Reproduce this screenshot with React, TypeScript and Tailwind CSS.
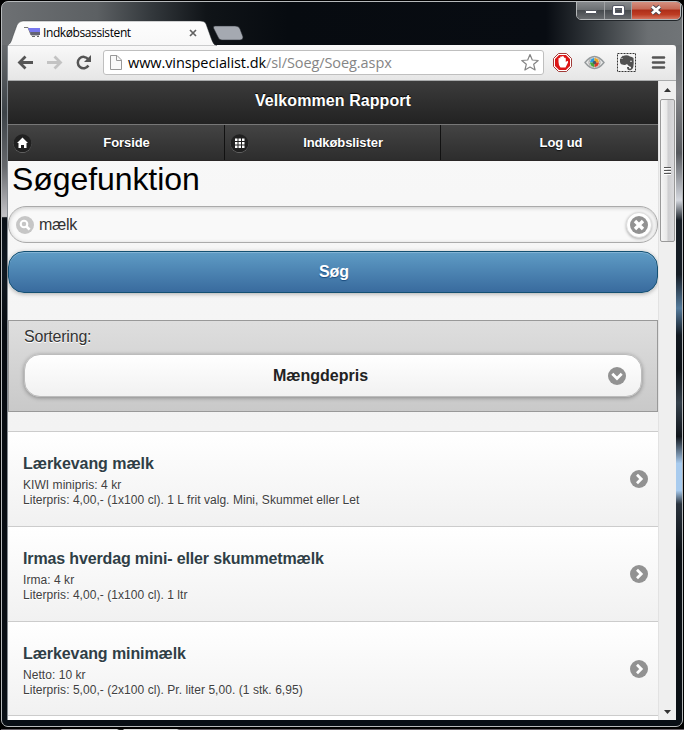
import React from "react";

const arial = "font-['Liberation_Sans',Arial,sans-serif]";
const segoe = "font-['Open_Sans','Noto_Sans',sans-serif]";

type Item = { title: string; shop: string; detail: string; tracking: string };

const items: Item[] = [
  { title: "Lærkevang mælk", shop: "KIWI minipris: 4 kr", detail: "Literpris: 4,00,- (1x100 cl). 1 L frit valg. Mini, Skummet eller Let", tracking: "tracking-[-0.06px]" },
  { title: "Irmas hverdag mini- eller skummetmælk", shop: "Irma: 4 kr", detail: "Literpris: 4,00,- (1x100 cl). 1 ltr", tracking: "tracking-[-0.14px]" },
  { title: "Lærkevang minimælk", shop: "Netto: 10 kr", detail: "Literpris: 5,00,- (2x100 cl). Pr. liter 5,00. (1 stk. 6,95)", tracking: "tracking-[-0.09px]" },
];

function RoundIcon({ kind }: { kind: "right" | "down" | "close" | "search" }) {
  return (
    <svg width="18" height="18" viewBox="0 0 18 18" className="block shrink-0">
      <circle cx="9" cy="9" r="9" fill={kind === "search" ? "#c6c6c6" : "#929292"} />
      {kind === "right" && <path d="M7 4.8 11.2 9 7 13.2" fill="none" stroke="#fff" strokeWidth="2.8" />}
      {kind === "down" && <path d="M4.3 6.7 9 11.4 13.7 6.7" fill="none" stroke="#fff" strokeWidth="2.8" />}
      {kind === "close" && <path d="M5 5 13 13M13 5 5 13" fill="none" stroke="#fff" strokeWidth="3.4" />}
      {kind === "search" && (
        <g fill="none" stroke="#fff">
          <circle cx="8" cy="8" r="3.300" strokeWidth="2.100" />
          <path d="M10.3 10.3 13.6 13.6" strokeWidth="2.7" />
        </g>
      )}
    </svg>
  );
}

function WindowButtons() {
  return (
    <div className="absolute right-[1px] top-[-2px] flex h-[20px] w-[105px] overflow-hidden rounded-b-[5px] border border-[#b4b7b9] shadow-[0_0_0_1px_#22262a]">
      <div className="flex w-[28px] items-center justify-center border-r border-[#a0a2a4] bg-[linear-gradient(#8b8e91_0%,#6c7073_48%,#45494d_50%,#686b6e_100%)]">
        <div className="mt-[4px] h-[4px] w-[12px] rounded-[1px] border border-[#51545d] bg-white" />
      </div>
      <div className="flex w-[27px] items-center justify-center border-r border-[#a0a2a4] bg-[linear-gradient(#8b8e91_0%,#6c7073_48%,#45494d_50%,#686b6e_100%)]">
        <div className="h-[9px] w-[11px] rounded-[1px] border-2 border-white outline outline-[#555966]">
          <div className="h-full w-full border border-[#555966]" />
        </div>
      </div>
      <div className="flex flex-1 items-center justify-center bg-[linear-gradient(#d69586_0%,#c56a56_45%,#ae2d18_50%,#bd3c23_75%,#d57560_100%)]">
        <svg width="14" height="12" viewBox="0 0 14 12">
          <path d="M3 2.5 11 9.5M11 2.5 3 9.5" stroke="#4b4751" strokeWidth="4.5" />
          <path d="M3 2.5 11 9.5M11 2.5 3 9.5" stroke="#fff" strokeWidth="2.7" />
        </svg>
      </div>
    </div>
  );
}

function TabStrip() {
  return (
    <div className="relative h-[43px] w-full shrink-0">
      <svg className="absolute left-0 top-[16px]" width="260" height="28" viewBox="2 18 260 28">
        <defs>
          <linearGradient id="tab" x2="0" y2="1">
            <stop offset="0" stopColor="#fdfdfd" />
            <stop offset="1" stopColor="#f8f8f8" />
          </linearGradient>
        </defs>
        <path d="M7 46C11 43 11 42 13 36L17 25Q19 21 23 21H200Q205 21 206 24L211 38Q213 45 217 46Z" fill="url(#tab)" stroke="#343739" strokeOpacity=".45" />
        <path d="M215 26H235Q239 26 240 29L243 37Q243 40 240 40H222Q219 40 218 37L213.500 28Q213 26 215 26Z" fill="#a5a9b1" stroke="#252a2f" strokeOpacity=".5" />
        <path d="M24 27.500H28L31 35H39" fill="none" stroke="#777" />
        <path d="M28 28H40V32H30Z" fill="#7777ee" />
        <path d="M30 32H40V35H31Z" fill="#626273" />
        <path d="M32 36.500H35M37 36.500H39" stroke="#666" />
        <path d="M190 30 196 36M196 30 190 36" stroke="#626262" strokeWidth="1.7" />
      </svg>
      <span className={`absolute left-[41px] top-[22px] whitespace-nowrap text-[12px] leading-[18px] tracking-[-0.4px] text-black ${segoe}`}>Indkøbsassistent</span>
      <WindowButtons />
    </div>
  );
}

function Toolbar() {
  return (
    <div className="flex h-[36px] shrink-0 items-center rounded-tr-[3px] border-b border-[#a9abac] bg-gradient-to-b from-[#f9f9f9] to-[#e6e6e6]">
      <svg width="95" height="35" viewBox="8 45 95 35" fill="none" className="shrink-0">
        <path d="M33 62.500H20M25.500 56.500 19.500 62.500 25.500 68.500" stroke="#555" strokeWidth="2.8" />
        <path d="M47 62.500H60M54.500 56.500 60.500 62.500 54.500 68.500" stroke="#c3c3c3" strokeWidth="2.8" />
        <path d="M88.200 59.300A5.700 5.700 0 1 0 88.400 65.500" stroke="#555" strokeWidth="2.5" />
        <path d="M91 55V62H84Z" fill="#555" />
      </svg>
      <div className="mr-px flex h-[25px] w-[441px] shrink-0 items-center rounded-[3px] border border-[#bfbfbf] bg-white">
        <svg width="24" height="23" viewBox="103 51 24 23" className="shrink-0">
          <path d="M109.500 55.500H116L120.500 60V69.500H109.500Z" fill="#fafafa" stroke="#999" />
          <path d="M115.500 56V60.500H120" fill="none" stroke="#999" />
        </svg>
        <span className={`w-[391px] whitespace-nowrap text-[14.5px] leading-[21px] tracking-[-0.08px] text-[#858585] ${segoe}`}><span className="text-black">www.vinspecialist.dk</span>/sl/Soeg/Soeg.aspx</span>
        <svg width="22" height="23" viewBox="519 51 22 23" className="shrink-0">
          <path d="M530 54.500 532.300 60 538.200 60.500 533.700 64.300 535.100 70 530 67 524.900 70 526.300 64.300 521.800 60.500 527.700 60Z" fill="#fff" stroke="#858585" strokeWidth="1.200" strokeLinejoin="round" />
        </svg>
      </div>
      <svg width="131" height="35" viewBox="545 45 131 35" className="shrink-0">
        <path d="M558.500 53.500H566.500L571.500 58.500V66.500L566.500 71.500H558.500L553.500 66.500V58.500Z" fill="#fff" stroke="#a23b38" />
        <path d="M559 55H566L570 59V66L566 70H559L555 66V59Z" fill="#dd1616" />
        <path d="M558.500 62V58.500Q559.300 57 560.200 58.500V57Q561 55.500 562 57V56.500Q563 55.500 564 57V58Q565 57 565.800 58.500V62L567 61Q568.500 60.500 568 62.500L565.500 67.500H560.500Q558.500 65.500 558.500 62Z" fill="#fff" />
        <path d="M585 62.500Q594.500 50.500 604 62.500Q594.500 74.500 585 62.500Z" fill="#e8e8e8" stroke="#969b9d" strokeWidth="1.4" />
        <circle cx="594.500" cy="62.500" r="5.500" fill="#fff" stroke="#999" />
        <path d="M594.500 62.500V58A4.500 4.500 0 0 0 590 62.500Z" fill="#2a9add" />
        <path d="M594.500 62.500H599A4.500 4.500 0 0 0 594.500 58Z" fill="#eca222" />
        <path d="M594.500 62.500H590A4.500 4.500 0 0 0 594.500 67Z" fill="#46a83b" />
        <path d="M594.500 62.500V67A4.500 4.500 0 0 0 599 62.500Z" fill="#d73a27" />
        <circle cx="594.500" cy="62.500" r="1.700" fill="#4b5863" />
        <rect x="617.500" y="53.500" width="18" height="18" fill="#f4f4f4" stroke="#333" strokeDasharray="2 1" />
        <path d="M623 56V59H620Q619.500 64 622 64.500Q625 65.500 627 64Q629 67 631 67V68.500H629V67H627Q627 71 631 70Q634.500 69 633.500 58Q632 56.500 630 56.500Q627 54.500 623 56Z" fill="#505050" />
        <path d="M623 55.500 620 58.500H623Z" fill="#505050" />
        <path d="M630 61.500Q631 60.500 632 61.500" stroke="#ddd" fill="none" />
        <path d="M653 57.500H664M653 62.500H664M653 67.500H664" stroke="#555" strokeWidth="2.6" strokeLinecap="round" />
      </svg>
    </div>
  );
}

function NavItem({ label, width, icon }: { label: string; width: string; icon?: "home" | "grid" }) {
  return (
    <div className={`flex h-full items-center border-r border-[#111] bg-gradient-to-b from-[#444] to-[#2d2d2d] ${width}`}>
      {icon && (
        <svg width="20" height="20" viewBox="0 0 20 20" className="-mr-[19px] ml-[4px] shrink-0">
          <circle cx="10.500" cy="11" r="9" fill="#777" />
          <circle cx="10.500" cy="10.300" r="9" fill="#202020" />
          {icon === "home" ? (
            <path d="M10.500 4.500 16 10H14.500V15H12V12H9V15H6.500V10H5Z" fill="#fff" />
          ) : (
            <g fill="#fff">
              {[6, 9.5, 13].map((y) => [6, 9.5, 13].map((x) => <rect key={`${x}-${y}`} x={x} y={y - 0.5} width="2.500" height="2.500" />))}
            </g>
          )}
        </svg>
      )}
      <span className={`flex-1 text-center text-[13px] font-bold leading-[16px] tracking-[-0.09px] text-white [text-shadow:0_1px_1px_#111] ${icon ? "pl-[16px]" : "pl-[23px]"}`}>{label}</span>
    </div>
  );
}

function Page() {
  return (
    <main className={`flex h-full w-[650px] shrink-0 flex-col overflow-hidden bg-gradient-to-b from-[#f9f9f9] to-[#eeeeee] ${arial}`}>
      <header className="flex h-[43px] shrink-0 items-center justify-center bg-gradient-to-b from-[#3c3c3c] to-[#222] text-[16px] font-bold text-white [text-shadow:0_-1px_1px_#000]">
        <span className="-mt-[3px] tracking-[0.08px]">Velkommen Rapport</span>
      </header>
      <nav className="flex h-[37px] shrink-0 border-b border-t border-b-[#2a2626] border-t-[#777]">
        <NavItem label="Forside" width="w-[217px]" icon="home" />
        <NavItem label="Indkøbslister" width="w-[216px]" icon="grid" />
        <NavItem label="Log ud" width="w-[217px] border-r-0" />
      </nav>
      <h1 className="ml-[4px] h-[45px] shrink-0 whitespace-nowrap text-[32px] leading-[37px] tracking-[-0.08px] text-black">Søgefunktion</h1>
      <div className="flex h-[37px] shrink-0 items-center rounded-[18px] border border-[#aaa] bg-[#f9f9f9] pl-[7px] pr-[8px] shadow-[inset_0_1px_4px_rgba(0,0,0,.2)]">
        <RoundIcon kind="search" />
        <span className="ml-[5px] flex-1 text-[16px] leading-[20px] tracking-[-0.25px] text-[#333]">mælk</span>
        <div className="-mr-[3px] rounded-full border border-[#ddd] bg-white p-[3px] shadow-[0_1px_3px_rgba(0,0,0,.3)]"><RoundIcon kind="close" /></div>
      </div>
      <div className="mt-[8px] flex h-[42px] shrink-0 items-center justify-center rounded-[16px] border border-[#145072] bg-gradient-to-b from-[#5f9cc5] to-[#396b9e] text-[16px] font-bold text-white shadow-[inset_0_1px_0_#83b3d4,0_1px_4px_rgba(0,0,0,.3)] [text-shadow:0_1px_1px_#194b7e]"><span className="pl-[2px]">Søg</span></div>
      <section className="mt-[27px] flex h-[92px] shrink-0 flex-col border border-[#999] bg-gradient-to-b from-[#dedede] to-[#c9c9c9] px-[15px] pt-[6px]">
        <span className="text-[16px] leading-[20px] tracking-[-0.2px] text-[#333] [text-shadow:0_1px_0_#fff]">Sortering:</span>
        <div className="mt-[7px] flex h-[43px] items-center rounded-[16px] border border-[#bcbcbc] bg-gradient-to-b from-white to-[#f1f1f1] pr-[15px] shadow-[0_1px_4px_rgba(0,0,0,.35)]">
          <span className="flex-1 pl-[8px] text-center text-[16px] font-bold leading-[20px] text-[#222]">Mængdepris</span>
          <RoundIcon kind="down" />
        </div>
      </section>
      <ul className="mt-[19px] shrink-0">
        {items.map((item) => (
          <li key={item.title} className="flex h-[95px] items-center border-t border-[#ccc] bg-gradient-to-b from-white to-[#f1f1f1] pl-[15px] pr-[10px] last:h-[94px]">
            <div className="flex-1 whitespace-nowrap pt-[4px] text-[#404040] [text-shadow:0_1px_0_#fff]">
              <h3 className={`text-[16px] font-bold leading-[20px] text-[#2f3e46] ${item.tracking}`}>{item.title}</h3>
              <p className="mt-[4px] text-[12px] leading-[15px] tracking-[0.05px]">{item.shop}</p>
              <p className="text-[12px] leading-[15px] tracking-[0.05px]">{item.detail}</p>
            </div>
            <RoundIcon kind="right" />
          </li>
        ))}
      </ul>
      <div className="h-[5px] shrink-0 border-t border-[#ccc] bg-white" />
    </main>
  );
}

function Scrollbar() {
  return (
    <aside className="flex w-[18px] flex-col items-center border-l border-[#e2e2e2] bg-[#efefef]">
      <div className="flex h-[18px] w-full shrink-0 items-center justify-center"><svg width="7" height="4"><path d="M0 4 3.500 0 7 4Z" fill="#333" /></svg></div>
      <div className="flex h-[143px] w-[15px] shrink-0 flex-col items-center justify-center gap-[1px] rounded-[2px] border border-[#999] bg-[linear-gradient(90deg,#f6f6f6,#e7e7e7_48%,#cdcdcf_52%,#dadadd)]">
        <div className="h-[2px] w-[7px] border-b border-white bg-[#555]" />
        <div className="h-[2px] w-[7px] border-b border-white bg-[#555]" />
        <div className="h-[2px] w-[7px] border-b border-white bg-[#555]" />
      </div>
      <div className="mt-auto flex h-[17px] w-full shrink-0 items-center justify-center"><svg width="7" height="4"><path d="M0 0 3.500 4 7 0Z" fill="#333" /></svg></div>
    </aside>
  );
}

export default function App() {
  return (
    <div className="h-[730px] w-[684px] overflow-hidden bg-black pl-[1px] pt-[1px]">
      <div className="flex h-[726px] w-[682px] flex-col overflow-hidden rounded-[7px] border border-[#b6b9bb] bg-[linear-gradient(90deg,#6d7073_0,#5c6063_14%,#33383c_22%,#101418_30%,#070b10_42%,#080c12_80%,#3a3f43_88%,#6b6f72_95%,#707477_100%)]">
        <TabStrip />
        <div className="flex h-[675px] shrink-0">
          <div className="w-[6px] shrink-0 border-r border-[#858b91] bg-[linear-gradient(#66696c_0,#3c4247_10%,#66686c_18%,#b9b9bd_24.5%,#c3c3c6_25.4%,#090f16_25.6%,#101820_34%,#070b10_42%,#0a0f15_100%)]" />
          <div className="flex w-[668px] shrink-0 flex-col">
            <Toolbar />
            <div className="flex h-[639px] shrink-0">
              <Page />
              <Scrollbar />
            </div>
          </div>
          <div className="w-[6px] shrink-0 bg-[linear-gradient(#6b6f72_0,#85868a_7%,#55585d_16%,#d5d8df_23%,#151c24_26%,#151c24_34%,#547a9b_39%,#111820_43%,#0b1015_48%,#34404b_53%,#10151b_58%,#a8cbee_62%,#a8cbee_66%,#2a333d_68%,#0b1015_75%,#0a0f15_100%)]" />
        </div>
        <div className="h-[6px] shrink-0 bg-[#090f16]" />
      </div>
      <div className="mt-[2px] h-px bg-[linear-gradient(90deg,#665f66_0,#665f66_60px,#ddd_61px,#ddd_116px,#222_118px,#222_122px,#ddd_123px,#ddd_176px,#665f66_178px,#665f66_100%)]" />
    </div>
  );
}
